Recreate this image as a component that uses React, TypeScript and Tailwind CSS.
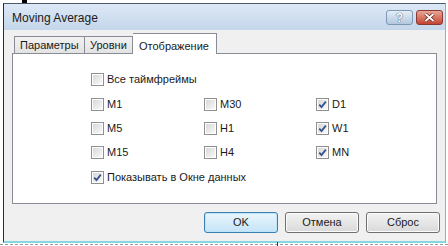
import React from "react";

const font = "font-['Liberation_Sans','DejaVu_Sans',sans-serif]";

const Box = ({ checked }: { checked?: boolean }) => (
  <span className="w-[13px] h-[13px] border border-[#8f8f8f] bg-white p-[1px] flex shrink-0">
    <span className="flex-1 bg-gradient-to-br from-[#d8d8d8] to-[#f9f9f9] flex items-center justify-center">
      {checked && (
        <svg width="9" height="9" viewBox="0 0 9 9">
          <path d="M1.2 4.6 L3.5 7 L7.8 1.6" stroke="#3a5590" strokeWidth="1.9" fill="none" />
        </svg>
      )}
    </span>
  </span>
);

const Check = ({ label, checked }: { label: string; checked?: boolean }) => (
  <div className="flex items-center gap-[3px] h-[13px]">
    <Box checked={checked} />
    <span className="text-[11px] leading-none text-[#1a1a1a]">{label}</span>
  </div>
);

const grid = [
  ["M1", "M30", "D1"],
  ["M5", "H1", "W1"],
  ["M15", "H4", "MN"],
];

const Btn = ({ label, def }: { label: string; def?: boolean }) => (
  <button
    className={`w-[74px] h-[21px] rounded-[3px] border text-[11px] text-[#1a1a1a] flex items-center justify-center ${
      def
        ? "border-[#3c7fb1] bg-gradient-to-b from-[#eaf6fd] to-[#c4e4f6] shadow-[inset_0_0_0_1px_#bde4f8]"
        : "border-[#707070] bg-gradient-to-b from-[#f3f3f3] to-[#d9d9d9] shadow-[inset_0_0_0_1px_#fcfcfc]"
    }`}
  >
    {label}
  </button>
);

const App = () => {
  return (
    <div className={`w-[448px] h-[246px] bg-white relative overflow-hidden ${font}`}>
      {/* chart bits behind the dialog */}
      <div className="absolute left-[22px] top-0 w-[5px] h-[3px] bg-black" />
      <div className="absolute left-0 right-0 top-[244px] border-t border-dashed border-[#9a9a9a]" />
      <div className="absolute left-[277px] top-[242px] w-[1px] h-[4px] bg-[#333]" />

      <div className="ml-[3px] mt-[3px] w-[443px] h-[240px] border-l border-t border-l-[#2b2b2b] border-t-[#4a5a6a] border-r border-r-[#8fb0d0] border-b-[2px] border-b-[#86d8e0] flex flex-col">
        {/* title bar */}
        <div className="h-[26px] bg-gradient-to-b from-[#dde8f5] to-[#c4d6ea] flex items-start">
          <span className="pl-[8px] pt-[5px] text-[12px] text-[#1b1b1b]">Moving Average</span>
          <div className="ml-auto mr-[2px] mt-[6px] flex gap-[3px]">
            <div className="w-[27px] h-[15px] rounded-[3px] border border-[#7d97b5] bg-gradient-to-b from-[#e6eef7] to-[#b3c8df] flex items-center justify-center text-[12px] font-bold leading-none text-white [text-shadow:0_0_1px_#3b5272,0_0_1px_#3b5272]">
              ?
            </div>
            <div className="w-[27px] h-[15px] rounded-[3px] border border-[#8a3a30] bg-gradient-to-b from-[#e8a596] to-[#c2432f] flex items-center justify-center">
              <svg width="11" height="9" viewBox="0 0 11 9">
                <path d="M1.5 1 L9.5 8 M9.5 1 L1.5 8" stroke="#5a1f18" strokeWidth="3.2" />
                <path d="M1.5 1 L9.5 8 M9.5 1 L1.5 8" stroke="#ffffff" strokeWidth="1.8" />
              </svg>
            </div>
          </div>
        </div>

        {/* client */}
        <div className="flex-1 bg-[#f0f0f0] px-[8px] pt-[3px] flex flex-col">
          <div className="flex items-end h-[20px] pl-[2px] relative z-10">
            <div className="h-[17px] px-[5px] border border-b-0 border-[#898c95] bg-gradient-to-b from-[#f2f2f2] to-[#e3e3e3] text-[11px] text-[#1a1a1a] flex items-center w-[71px]">
              Параметры
            </div>
            <div className="h-[17px] px-[5px] border border-b-0 border-l-0 border-[#898c95] bg-gradient-to-b from-[#f2f2f2] to-[#e3e3e3] text-[11px] text-[#1a1a1a] flex items-center w-[48px]">
              Уровни
            </div>
            <div className="h-[21px] -mb-[1px] px-[6px] border border-b-0 border-l-0 border-[#898c95] bg-white text-[11px] text-[#1a1a1a] flex items-start pt-[4px] w-[84px]">
              Отображение
            </div>
          </div>
          <div className="h-[151px] w-[425px] border border-[#898c95] bg-white pl-[78px] pt-[19px] flex flex-col">
            <Check label="Все таймфреймы" />
            <div className="mt-[12px] flex flex-col gap-[11px]">
              {grid.map((row) => (
                <div key={row[0]} className="grid grid-cols-[113px_112px_auto]">
                  {row.map((tf) => (
                    <Check key={tf} label={tf} checked={tf === "D1" || tf === "W1" || tf === "MN"} />
                  ))}
                </div>
              ))}
            </div>
            <div className="mt-[12px]">
              <Check label="Показывать в Окне данных" checked />
            </div>
          </div>
          <div className="mt-[8px] flex justify-end gap-[7px] pr-[0px] mr-[-3px]">
            <Btn label="OK" def />
            <Btn label="Отмена" />
            <Btn label="Сброс" />
          </div>
        </div>
      </div>
    </div>
  );
};

export default App;
